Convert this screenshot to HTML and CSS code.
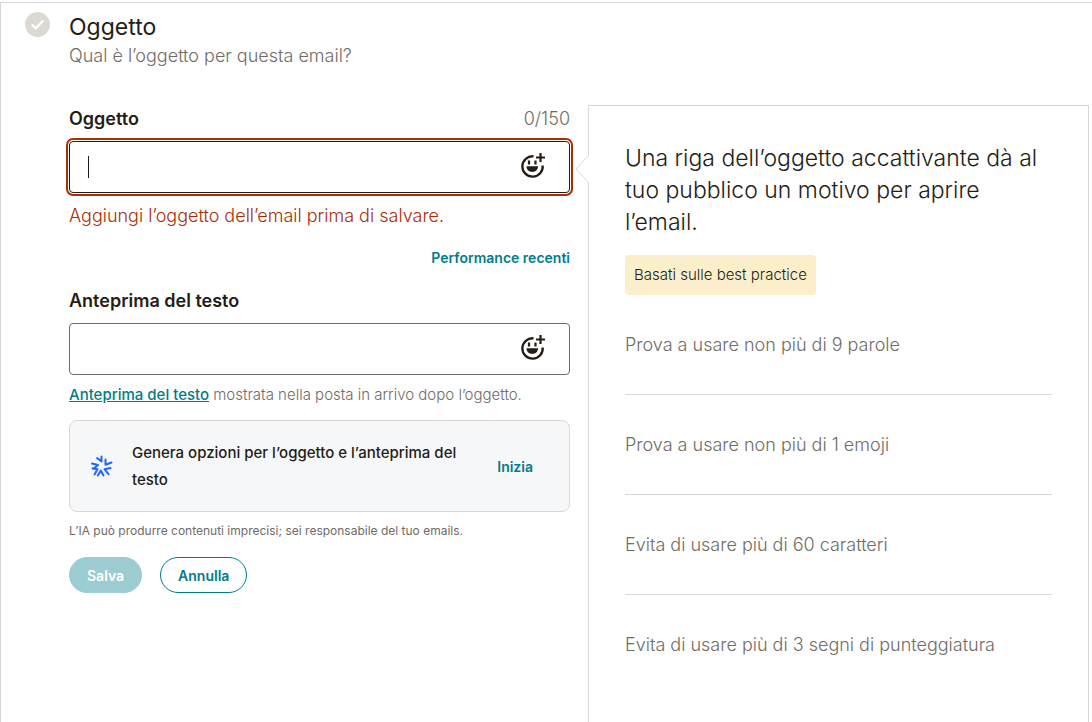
FILE: index.html
```html
<!DOCTYPE html>
<html lang="it">
<head>
    <meta charset="UTF-8">
    <meta name="viewport" content="width=device-width, initial-scale=1.0">
    <title>Oggetto</title>
    <link rel="stylesheet" href="styles.css">
</head>
<body>

<main class="step">
    <header class="step-header">
        <svg class="step-check" viewBox="0 0 26 26" aria-hidden="true">
            <circle cx="13" cy="13" r="13" fill="#dbd9d2"/>
            <path d="M7 13l4 4 8-8" fill="none" stroke="#fff" stroke-width="2.400"/>
        </svg>
        <div>
            <h1>Oggetto</h1>
            <p>Qual è l’oggetto per questa email?</p>
        </div>
    </header>

    <div class="columns">
        <form class="subject-form">
            <div class="label-row">
                <label for="subject">Oggetto</label>
                <span class="counter">0/150</span>
            </div>
            <div class="field">
                <input class="error" type="text" id="subject" aria-describedby="subject-error">
                <span class="caret"></span>
                <button class="emoji-btn" type="button" aria-label="Inserisci emoji">
                    <svg viewBox="0 0 26 26"><use href="#emoji"/></svg>
                </button>
            </div>
            <p class="error-text" id="subject-error">Aggiungi l’oggetto dell’email prima di salvare.</p>
            <a class="recent" href="#">Performance recenti</a>

            <div class="label-row">
                <label for="preview">Anteprima del testo</label>
            </div>
            <div class="field">
                <input type="text" id="preview">
                <button class="emoji-btn" type="button" aria-label="Inserisci emoji">
                    <svg viewBox="0 0 26 26"><use href="#emoji"/></svg>
                </button>
            </div>
            <p class="help"><a href="#">Anteprima del testo</a> mostrata nella posta in arrivo dopo l’oggetto.</p>

            <div class="ai-card">
                <svg class="ai-icon" viewBox="0 0 24 24" aria-hidden="true">
                    <g fill="none" stroke="#1f66ff" stroke-width="2" stroke-linecap="round" stroke-linejoin="round">
                        <path d="M7 4l4.500 3.500V2.500"/>
                        <path d="M15.500 5.500v5.200l6-2.200"/>
                        <path d="M20.500 14l-6 1.200 4 5"/>
                        <path d="M13.500 21.500l-2.700-5-3 5"/>
                        <path d="M4.500 20.500l3-5.300-5-.7"/>
                        <path d="M2 9.500l6 1.500-4 3.200"/>
                    </g>
                </svg>
                <p>Genera opzioni per l’oggetto e l’anteprima del testo</p>
                <button class="link-btn" type="button">Inizia</button>
            </div>
            <p class="disclaimer">L’IA può produrre contenuti imprecisi; sei responsabile del tuo emails.</p>

            <div class="actions">
                <button class="btn btn-primary" type="submit" disabled>Salva</button>
                <button class="btn btn-secondary" type="button">Annulla</button>
            </div>
        </form>

        <aside class="tips">
            <svg class="tips-arrow" viewBox="0 0 14 28" aria-hidden="true">
                <path d="M14 0L1 14l13 14" fill="#fff" stroke="#d8d8d8"/>
            </svg>
            <h2>Una riga dell’oggetto accattivante dà al tuo pubblico un motivo per aprire l’email.</h2>
            <span class="badge">Basati sulle best practice</span>
            <ul>
                <li>Prova a usare non più di 9 parole</li>
                <li>Prova a usare non più di 1 emoji</li>
                <li>Evita di usare più di 60 caratteri</li>
                <li>Evita di usare più di 3 segni di punteggiatura</li>
            </ul>
        </aside>
    </div>
</main>

<svg class="sprite" aria-hidden="true">
    <symbol id="emoji" viewBox="0 0 26 26">
        <path d="M13.500 3.300A10.200 10.200 0 1 0 22.700 12.500" fill="none" stroke="#241c15" stroke-width="2.300"/>
        <path d="M20.500 0v9M16 4.500h9" fill="none" stroke="#241c15" stroke-width="2.200"/>
        <path d="M9 7.500v4M15.500 7.500v4" fill="none" stroke="#241c15" stroke-width="2.200"/>
        <path d="M6.500 13.200h11.500c0 7.600-11.500 7.600-11.500 0z" fill="#241c15"/>
    </symbol>
</svg>

</body>
</html>
```
FILE: styles.css
```css
* {
    box-sizing: border-box;
}

body {
    margin: 0;
    padding-top: 2px;
    font-family: Inter, "Liberation Sans", sans-serif;
    font-size: 18px;
    color: #241c15;
    background-color: #fff;
}

h1, h2, p, ul {
    margin: 0;
    padding: 0;
    font-weight: 400;
}

button, input {
    font: inherit;
}

a, .link-btn {
    color: #007c89;
    font-weight: 600;
}

.step {
    display: flex;
    flex-direction: column;
    min-height: calc(100vh - 2px);
    padding-right: 3px;
    border-top: 1px solid #d8d8d8;
    border-left: 1px solid #d8d8d8;
}

.step-header {
    display: flex;
    gap: 19px;
    padding: 9px 0 35px 24px;
}

.step-check {
    width: 25px;
    height: 25px;
}

.step-header h1 {
    font-size: 23px;
    line-height: 30px;
}

.step-header p {
    color: #6f6b66;
    line-height: 28px;
    font-weight: 300;
}

/* form + tips */
.columns {
    display: grid;
    grid-template-columns: 1fr 1fr;
    gap: 18px;
    flex: 1;
    padding-left: 68px;
}

.label-row {
    display: flex;
    justify-content: space-between;
    line-height: 28px;
    margin-bottom: 8px;
}

.label-row label {
    font-weight: 600;
}

.counter {
    color: #6f6b66;
    font-weight: 300;
}

.field {
    position: relative;
}

.field input {
    display: block;
    width: 100%;
    height: 52px;
    padding: 0 64px 0 19px;
    border: 1px solid #6f6b66;
    border-radius: 4px;
    outline: none;
}

.field input.error {
    border-color: #241c15;
    box-shadow: 0 0 0 1px #fff, 0 0 0 3px #a92d05;
}

.caret {
    position: absolute;
    top: 15px;
    left: 19px;
    width: 1px;
    height: 22px;
    background-color: #241c15;
}

.emoji-btn {
    position: absolute;
    top: 12px;
    right: 24px;
    width: 26px;
    height: 26px;
    padding: 0;
    border: 0;
    background: none;
    cursor: pointer;
}

.emoji-btn svg {
    display: block;
}

.error-text {
    margin-top: 9px;
    line-height: 28px;
    color: #a92d05;
    font-weight: 300;
}

.recent {
    display: block;
    width: fit-content;
    margin: 16px 0 17px auto;
    font-size: 14px;
    line-height: 24px;
    text-decoration: none;
}

.help {
    margin-top: 8px;
    font-size: 15px;
    line-height: 24px;
    color: #6f6b66;
    font-weight: 300;
}

.help a {
    font-weight: 500;
}

.ai-card {
    display: flex;
    align-items: center;
    margin-top: 13px;
    padding: 18px 36px 18px 20px;
    border: 1px solid #d8d8d8;
    border-radius: 8px;
    background-color: #f6f7f9;
}

.ai-icon {
    width: 24px;
    height: 24px;
    flex: none;
}

.ai-card p {
    flex: 1;
    margin: 0 24px 0 18px;
    font-size: 15px;
    line-height: 27px;
    font-weight: 500;
}

.link-btn {
    padding: 0;
    border: 0;
    background: none;
    font-size: 14px;
    cursor: pointer;
}

.disclaimer {
    margin-top: 10px;
    font-size: 12px;
    line-height: 18px;
    color: #6f6b66;
}

.actions {
    display: flex;
    gap: 18px;
    margin-top: 17px;
}

.btn {
    height: 36px;
    padding: 0 17px;
    border: 1px solid #007c89;
    border-radius: 18px;
    font-size: 14px;
    font-weight: 600;
}

.btn-primary {
    border-color: #9bccd1;
    background-color: #9bccd1;
    color: #fff;
}

.btn-secondary {
    background-color: #fff;
    color: #007c89;
}

.tips {
    position: relative;
    padding: 36px;
    border: 1px solid #d8d8d8;
    border-bottom: 0;
}

.tips-arrow {
    position: absolute;
    top: 49px;
    left: -14px;
    width: 14px;
    height: 28px;
}

.tips h2 {
    font-size: 23px;
    line-height: 32px;
    font-weight: 300;
}

.badge {
    display: block;
    width: fit-content;
    margin-top: 17px;
    padding: 0 9px;
    border-radius: 4px;
    background-color: #fbeeca;
    font-size: 15px;
    line-height: 40px;
    font-weight: 300;
}

.tips ul {
    list-style: none;
}

.tips li {
    padding: 36px 0 35px;
    border-bottom: 1px solid #d8d8d8;
    line-height: 28px;
    color: #6f6b66;
    font-weight: 300;
}

.tips li:last-child {
    padding-bottom: 0;
    border-bottom: 0;
}

.sprite {
    display: none;
}
```
